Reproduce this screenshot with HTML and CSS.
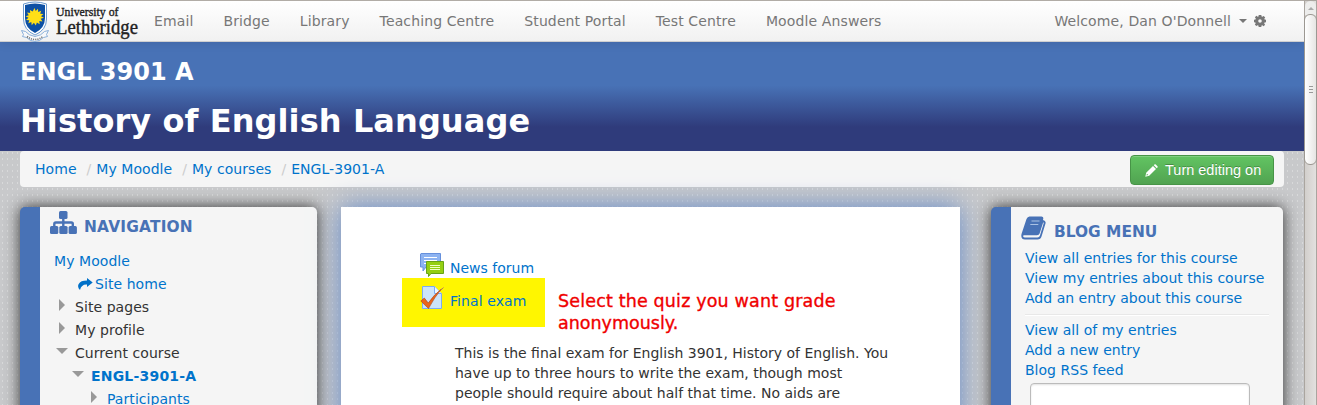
FILE: index.html
```html
<!DOCTYPE html>
<html lang="en">
<head>
<meta charset="utf-8">
<title>ENGL 3901 A: History of English Language</title>
<link rel="stylesheet" href="styles.css">
</head>
<body>
<div class="page">
  <header class="navbar">
    <svg class="logo" width="120" height="41" viewBox="0 0 120 41">
      <path d="M3.500 3Q15 -1 26.500 3V18Q26.500 29 15 34Q3.500 29 3.500 18Z" fill="#fff" stroke="#6c9bd0" stroke-width="1"/>
      <path d="M5 4Q15 1 25 4V17Q25 27 15 32Q5 27 5 17Z" fill="#0d50a4"/>
      <path d="M14.500 7l1.200 3 2.300-2.300.2 3.300 3-1.300-1 3.100 3.200.200-2.400 2.300 2.900 1.500-3.200.9 1.800 2.700-3.200-.5.4 3.300-2.800-1.800-1.100 3.100-1.900-2.700-2.200 2.400-.4-3.300-3 1.400 1-3.100-3.300-.2 2.500-2.200-2.900-1.500 3.200-1-1.800-2.700 3.200.5-.3-3.200 2.800 1.700z" fill="#ffdf17"/>
      <circle cx="14.500" cy="16" r="5.500" fill="#ffdf17"/>
      <path d="M1.500 29.500l4 1q3 4 9.500 5 6.500-1 9.500-5l4-1-2 4 1 2-4 1q-4 4-8.500 4t-8.500-4l-4-1 1-2z" fill="#f7f8fa" stroke="#7fa8d6" stroke-width=".9"/>
      <path d="M7 35.500q4 3 8 3t8-3" fill="none" stroke="#777" stroke-width="1.600" stroke-dasharray="1.200 1"/>
      <text class="logo-text" x="36" y="15" font-size="13" textLength="62.500" lengthAdjust="spacingAndGlyphs">University of</text>
      <text class="logo-text" x="36" y="33" font-size="20.500" textLength="82" lengthAdjust="spacingAndGlyphs">Lethbridge</text>
    </svg>
    <nav class="links">
      <a>Email</a><a>Bridge</a><a>Library</a><a>Teaching Centre</a><a>Student Portal</a><a>Test Centre</a><a>Moodle Answers</a>
    </nav>
    <div class="user">
      <span>Welcome, Dan O'Donnell</span>
      <i class="caret"></i>
      <svg class="gear" width="12" height="12" viewBox="0 0 12 12"><path fill="#777" fill-rule="evenodd" d="M4.700 0h2.600l.3 1.500.8.3L9.700.9l1.500 1.500-.9 1.300.3.800L12 4.700v2.600l-1.500.3-.3.8.9 1.300-1.500 1.500-1.300-.9-.8.3L7.300 12H4.700l-.3-1.500-.8-.3-1.300.9L.8 9.600l.9-1.300-.3-.8L0 7.300V4.700l1.500-.3.3-.8L.9 2.300 2.400.8l1.300.9.8-.3zM6 4.200a1.800 1.800 0 100 3.600 1.800 1.800 0 000-3.600z"/></svg>
    </div>
  </header>
  <section class="banner">
    <h3>ENGL 3901 A</h3>
    <h2>History of English Language</h2>
  </section>
  <div class="crumbs">
    <a>Home</a><i>/</i><a>My Moodle</a><i>/</i><a>My courses</a><i>/</i><a>ENGL-3901-A</a>
    <button class="edit"><svg width="13" height="13" viewBox="0 0 13 13"><path fill="#fff" fill-rule="evenodd" d="M.3 12.700l.9-4L8 2l3 3-6.800 6.800zM8.800 1.200l.6-.6q.7-.7 1.400 0l1.600 1.600q.7.7 0 1.400l-.6.6zM1.900 9.700l-.4 1.800 1.800-.4z"/></svg><span>Turn editing on</span></button>
  </div>
  <main class="columns">
    <aside class="block left">
      <h4><svg width="27" height="23" viewBox="0 0 27 23"><g fill="#4872b6"><rect x="9" width="8.500" height="8" rx="1.500"/><rect y="15" width="8.300" height="8" rx="1.500"/><rect x="9.300" y="15" width="8.300" height="8" rx="1.500"/><rect x="18.600" y="15" width="8.300" height="8" rx="1.500"/></g><path d="M13.300 7v9M4.300 16v-3q0-1.500 1.500-1.500h15.500q1.500 0 1.500 1.500v3" fill="none" stroke="#4872b6" stroke-width="2.400"/></svg><span>NAVIGATION</span></h4>
      <ul class="tree">
        <li class="root"><a>My Moodle</a></li>
        <li class="home"><svg width="15" height="12" viewBox="0 0 15 12"><path fill="#0070c8" d="M9 0l5.700 4.500L9 9V6.500Q3.500 6 2 12-1 9 .7 6 2.500 2.600 9 2.600z"/></svg><a>Site home</a></li>
        <li><i class="tri right"></i>Site pages</li>
        <li><i class="tri right"></i>My profile</li>
        <li><i class="tri down"></i>Current course</li>
        <li class="d1"><i class="tri down"></i><a><b>ENGL-3901-A</b></a></li>
        <li class="d2"><i class="tri right"></i><a>Participants</a></li>
      </ul>
    </aside>
    <article class="content">
      <div class="activity forum">
        <svg width="24" height="24" viewBox="0 0 24 24"><path d="M1 .5h19.500V14H6l-3 4v-4H.5V1z" fill="#8db3f1" stroke="#6690dc"/><path d="M4 4.500h13M4 7.500h13M4 10.500h6" stroke="#fff" stroke-width="1.200"/><path d="M6.500 8.500h17v12H11l-2.500 3v-3h-2z" fill="#94cf12" stroke="#67a317"/><path d="M10 12.500h10M10 14.500h10M10 16.500h10" stroke="#efffc4"/></svg>
        <a>News forum</a>
      </div>
      <div class="quiz-row">
        <div class="activity marked">
          <svg width="24" height="25" viewBox="0 0 24 25"><path d="M2.500 1.500h12l7 7v15h-19z" fill="#cbe4f8" stroke="#7cacf0"/><path d="M14.500 1.500v7h7" fill="#eef7ff" stroke="#7cacf0"/><path d="M.8 16l3.500-3 4 5Q14 9.500 21.500 4q-7 8-13 19.500z" fill="#ea6518" stroke="#a9420f" stroke-width=".6"/><path d="M21 5L23.500 2.500" stroke="#b97862"/></svg>
          <a>Final exam</a>
        </div>
        <p class="note"><span class="wide">Select the quiz you want grade</span><br>anonymously.</p>
      </div>
      <p class="desc">This is the final exam for English 3901, History of English. You<br>have up to three hours to write the exam, though most<br>people should require about half that time. No aids are</p>
    </article>
    <aside class="block blog">
      <h4><svg width="25" height="24" viewBox="0 0 25 24"><path fill="#4872b6" fill-rule="evenodd" d="M8.500.500H20.500Q22.800.500 22.200 3L22 4Q25.300 5 24.500 7.500L20.500 20.500Q19.700 23.500 16.500 23.500H4Q.5 23.500.3 20 .2 18.500 1 16.500L5.500 3Q6.500.500 8.500.500ZM22.300 6L18.600 17.500Q18 19.300 16 19.300H3Q1.900 19.300 2.200 20.500 2.500 21.500 4 21.500H16.500Q18.300 21.500 18.900 19.700L22.700 7.300Z"/><path d="M10.500 5h8M9.300 8.500h8" stroke="#a9c1e3" stroke-width="1.200"/></svg><span>BLOG MENU</span></h4>
      <div class="group"><a>View all entries for this course</a><a>View my entries about this course</a><a>Add an entry about this course</a></div>
      <hr>
      <div class="group"><a>View all of my entries</a><a>Add a new entry</a><a>Blog RSS feed</a></div>
      <input class="search" type="text" aria-label="Search">
    </aside>
  </main>
</div>
<div class="scrollbar">
  <div class="up"><i></i></div>
  <div class="thumb"><i></i><i></i><i></i></div>
</div>
</body>
</html>
```
FILE: styles.css
```css
* { box-sizing: border-box; }
body {
  margin: 0; width: 1317px; height: 405px; overflow: hidden; display: flex;
  font: 14px/20px "DejaVu Sans", sans-serif; color: #333;
}
h2, h3, h4, p, ul { margin: 0; padding: 0; }
i { font-style: normal; }
a { color: #0073cb; white-space: nowrap; }
.page {
  width: 1304px; height: 405px; overflow: hidden; background-color: #c8c9cb;
  background-image: linear-gradient(90deg, #d6d7d8 1px, transparent 1px), linear-gradient(#c8c9cb, #c8c9cb);
  background-image: radial-gradient(ellipse 1px 1.500px at center, #d8d9da 70%, transparent);
  background-size: 5px 6px;
}
.navbar {
  position: relative; height: 42px; display: flex; padding: 1px 38px 0 20px;
  background: linear-gradient(#fff, #f1f1f1); border-top: 1px solid #b1aca6; border-bottom: 1px solid #d0d0d0;
  box-shadow: 0 1px 10px rgba(0,0,0,.1);
}
.logo { flex: none; margin-top: -1px; }
.logo-text { font-family: "Liberation Serif", serif; fill: #222; stroke: #222; stroke-width: .4px; }
.links { display: flex; gap: 30px; padding: 9px 0 0 14px; letter-spacing: .12px; }
.links a { color: #777; }
.user { margin-left: auto; display: flex; padding-top: 9px; color: #777; white-space: nowrap; letter-spacing: .12px; }
.caret { border: 4px solid transparent; border-top-color: #777; border-bottom: 0; height: 4px; margin: 8px 7px 0 8px; }
.gear { margin-top: 4px; }
.banner {
  height: 109px; padding: 15px 20px 0; color: #fff;
  background: linear-gradient(#4872b6 0 40%, #2f3b7b 78%);
}
.banner h3 { font-size: 24px; line-height: 30px; }
.banner h2 { font-size: 32px; line-height: 40px; margin-top: 14px; letter-spacing: .08px; }
.crumbs {
  width: 1264px; height: 36px; margin: 0 0 20px 20px; padding: 3px 10px 0 15px;
  display: flex; line-height: 30px; background: #f5f5f5; border-radius: 4px; letter-spacing: .05px;
}
.crumbs i { color: #ccc; padding: 0 5px 0 10px; }
.edit {
  margin: 1px 0 0 auto; width: 144px; height: 30px; display: flex; align-items: center; gap: 7px; padding: 0 0 0 14px;
  font: 14.500px "Liberation Sans", sans-serif; color: #fff; text-shadow: 0 -1px 0 rgba(0,0,0,.25);
  white-space: nowrap;
  background: linear-gradient(#62c462, #51a351); border: 1px solid #479447; border-radius: 4px;
  box-shadow: inset 0 1px 0 rgba(255,255,255,.2);
}
.columns { display: flex; align-items: flex-start; padding-left: 20px; }
.block {
  height: 230px; background: #f5f5f5; border-left: 20px solid #4872b6; border-radius: 5px;
  box-shadow: 0 0 15px #333;
}
.block h4 { display: flex; color: #4872b6; font-size: 15.400px; }
.left { width: 297px; padding: 4px 0 0 10px; }
.left h4 span { margin: 6px 0 0 7px; letter-spacing: .2px; }
.tree { list-style: none; margin-top: 13px; padding-left: 4px; line-height: 23px; letter-spacing: .06px; }
.tree li { display: flex; padding-left: 3px; }
.tree li.root { padding-left: 0; }
.tree li.home { padding-left: 24px; gap: 2px; }
.home svg { margin-top: 5px; }
.tree .d1 { padding-left: 19px; letter-spacing: .2px; }
.tree .d2 { padding-left: 35px; }
.tri { width: 18px; flex: none; letter-spacing: 0; }
.tri::before { content: ""; display: block; width: 0; border: 6px solid transparent; }
.tri.right::before { border-left-color: #999; border-right: 0; margin: 3px 0 0 2px; }
.tri.down::before { border-top-color: #999; border-bottom: 0; margin: 6px 0 0 -1px; }
.content {
  width: 619px; height: 230px; margin-left: 24px; padding: 46px 0 0 61px; background: #fff;
  box-shadow: 0 0 25px #6389c8;
}
.activity { display: flex; gap: 6px; padding-left: 18px; }
.forum { height: 25px; }
.forum a { padding-top: 5px; }
.quiz-row { display: flex; height: 49px; }
.marked { width: 143px; background: #fff600; padding-top: 7px; letter-spacing: .08px; }
.marked a { padding-top: 6px; }
.note {
  margin-left: 13px; padding-top: 12px; font-size: 17.500px; line-height: 22px; color: #f00000;
  -webkit-text-stroke: .35px #f00000; white-space: nowrap;
}
.wide { letter-spacing: .16px; }
.desc { padding: 16px 0 0 53px; white-space: nowrap; }
.blog { width: 292px; margin-left: 31px; padding: 9px 0 0 10px; }
.blog h4 { height: 32px; }
.blog h4 span { margin: 6px 0 0 8px; }
.group { display: flex; flex-direction: column; padding-left: 4px; letter-spacing: .02px; }
hr { margin: 6px 14px 4px 4px; border: 0; height: 2px; background: linear-gradient(#e8e8e8 50%, #fff 50%); }
.search {
  display: block; margin: 3px 0 0 9px; width: 220px; height: 30px;
  border: 1px solid #bbb; border-radius: 4px; background: #fff; box-shadow: inset 0 1px 2px rgba(0,0,0,.12);
}
.scrollbar { width: 13px; height: 405px; background: linear-gradient(90deg, #d2cfcc, #e3e1df); border: 1px solid #aaa59f; border-bottom: 0; }
.up { height: 14px; display: flex; justify-content: center; border-radius: 6px 6px 0 0; background: #ededec; }
.up i { height: 3px; margin-top: 6px; border: 3px solid transparent; border-top: 0; border-bottom-color: #aaa; }
.thumb {
  height: 151px; margin: -1px -1px 0; border: 1px solid #9c9892; border-radius: 6px;
  background: linear-gradient(90deg, #fff, #e6e5e3);
  display: flex; flex-direction: column; align-items: center; justify-content: center; gap: 2px;
}
.thumb i { width: 4px; height: 1px; background: #999; }
```
